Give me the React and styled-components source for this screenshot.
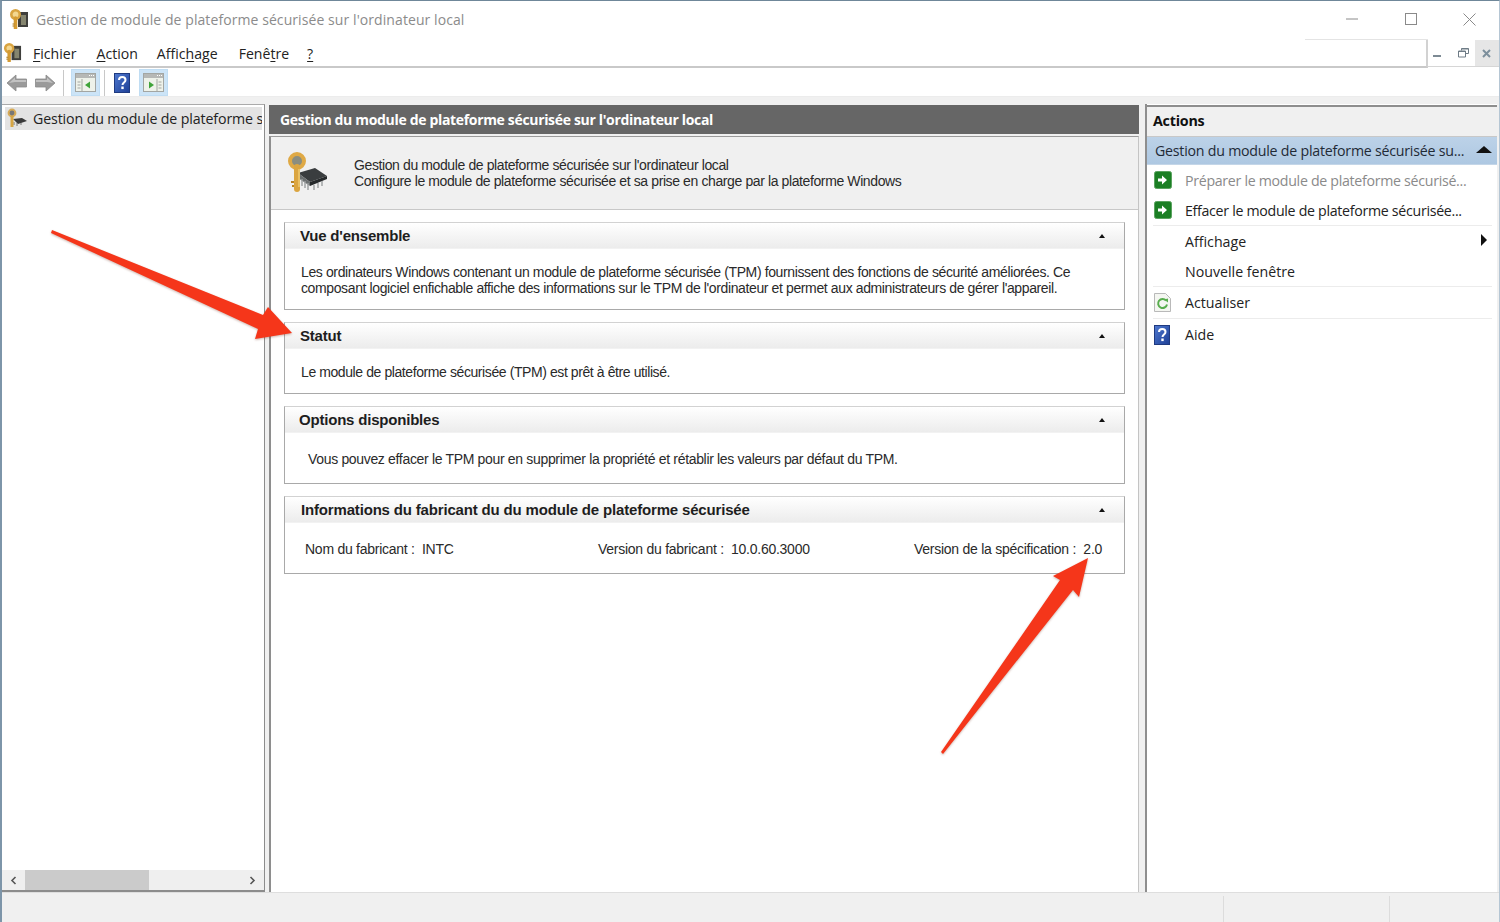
import React from 'react';
import styled, { createGlobalStyle } from 'styled-components';

const Global = createGlobalStyle`
  html, body { margin: 0; padding: 0; background: #fff; }
  #root { width: 1500px; height: 922px; overflow: hidden; }
  * { box-sizing: border-box; }
  svg { flex: none; display: block; }
`;
const ui = `"Open Sans", "Noto Sans", sans-serif`;
const classic = `"Liberation Sans", Arial, sans-serif`;

const Window = styled.div`
  position: relative; width: 1500px; height: 922px; display: flex; flex-direction: column;
  border-top: 1px solid #6f8799; border-left: 2px solid #7d95a9; border-right: 1px solid #b5c6d4;
  background: #fff; font-family: ${ui}; color: #1c1c1c; overflow: hidden;
`;
const TitleBar = styled.div`
  height: 38px; display: flex; align-items: center; padding: 0 0 2px 7px; flex: none;
`;
const TitleText = styled.div`
  margin-left: 7px; font-size: 14px; color: #8b8b8b; flex: 1; white-space: nowrap; letter-spacing: 0.08px;
`;
const Caption = styled.div`
  width: 59px; height: 36px; display: flex; align-items: center; justify-content: center;
`;
const MenuRow = styled.div`
  height: 29px; flex: none; display: flex; background: #fff;
`;
const MenuBar = styled.div`
  flex: 1; display: flex; align-items: center; padding-left: 1px; border-bottom: 2px solid #c9c9c9;
  border-right: 2px solid #d2d2d2; position: relative;
  &::after { content: ''; position: absolute; right: -2px; top: 0; width: 123px; height: 1px; background: #e4e4e4; }
`;
const MenuItem = styled.span`
  font-size: 14.1px; margin-left: ${p => p.$ml}px; color: #222; white-space: nowrap; padding-top: 1px;
  u { text-underline-offset: 2px; text-decoration-thickness: 1px; }
`;
const MdiButtons = styled.div`
  width: 71px; display: flex; align-items: stretch; height: 27px; margin-top: 1px; border-bottom: 1px solid #d6d6d6;
`;
const MdiButton = styled.div`
  width: 23.6px; display: flex; align-items: center; justify-content: center; background: ${p => p.$bg || '#fff'};
  padding-right: ${p => p.$pr || 0}px;
`;
const ToolBar = styled.div`
  height: 29px; flex: none; display: flex; align-items: center; padding: 1px 0 0 2px; background: #fff; border-bottom: 1px solid #ececec;
`;
const ToolButton = styled.div`
  width: ${p => p.$w || 29}px; height: 27px; display: flex; align-items: center; justify-content: center;
  background: ${p => p.$on ? '#cce4f7' : 'transparent'}; border: 1px solid ${p => p.$on ? '#c0ddf3' : 'transparent'};
`;
const ToolSep = styled.div`
  width: 1px; height: 26px; background: #c8c8c8; margin: 0 ${p => p.$r}px 0 ${p => p.$l}px;
`;
const Body = styled.div`
  flex: 1; min-height: 0; display: flex; background: #f0f0f0; padding-top: 7px;
`;
const TreePanel = styled.div`
  width: 263px; display: flex; flex-direction: column; background: #fff;
  border: 1px solid #8c8c8c; border-left: 0; border-top: 1px solid #aaa; border-bottom: 2px solid #8c8c8c;
`;
const TreeItem = styled.div`
  height: 23px; margin: 2px 2px 0 3px; background: #e3e3e3; display: flex; align-items: center; padding-left: 1px; overflow: hidden; flex: none;
`;
const TreeText = styled.span`
  margin-left: 5px; font-size: 14.2px; white-space: nowrap; color: #222; letter-spacing: -0.12px;
`;
const TreeFill = styled.div` flex: 1; `;
const ScrollBar = styled.div`
  height: 20px; display: flex; align-items: center; background: #efefef; flex: none;
`;
const ScrollEnd = styled.div`
  width: 23px; display: flex; justify-content: center; flex: none;
`;
const ScrollThumb = styled.div`
  width: 124px; height: 20px; background: #cbcbcb; flex: none;
`;
const ScrollRest = styled.div` flex: 1; `;
const Center = styled.div`
  margin-left: 4px; width: 870px; display: flex; flex-direction: column;
`;
const CenterHead = styled.div`
  height: 29px; margin-top: 1px; background: #666; color: #fff; font-weight: 700; font-size: 14px;
  display: flex; align-items: center; padding-left: 11px; flex: none; letter-spacing: -0.33px;
`;
const CenterBody = styled.div`
  flex: 1; margin-top: 2px; background: #fff; border-left: 2px solid #8e8e8e; border-right: 1px solid #c4c4c4;
  border-top: 1px solid #9a9a9a; display: flex; flex-direction: column;
`;
const Banner = styled.div`
  height: 73px; flex: none; background: #f0f0f0; border-bottom: 1px solid #c8c8c8; display: flex; align-items: center; padding-left: 15px;
`;
const BannerText = styled.div`
  margin-left: 26px; font-family: ${classic}; font-size: 14px; line-height: 16px; color: #2a2a2a; letter-spacing: -0.39px; white-space: nowrap;
`;
const Sections = styled.div`
  padding: 12px 13px 0 13px; display: flex; flex-direction: column; gap: 12px;
`;
const Section = styled.div`
  border: 1px solid #a9a9a9; border-top-color: #d2d2d2; background: #fff;
`;
const SectionHead = styled.div`
  height: 26px; display: flex; align-items: center; justify-content: space-between; padding: 0 19px 0 15px;
  background: linear-gradient(#ffffff, #ececec); border-bottom: 1px solid #f2f2f2;
`;
const SectionTitle = styled.div`
  font-family: ${classic}; font-weight: 700; font-size: 15px; color: #1e1e1e; letter-spacing: ${p => p.$ls ?? -0.2}px; white-space: nowrap; margin-left: ${p => p.$ml || 0}px;
`;
const Collapse = styled.div`
  width: 0; height: 0; border-left: 3.5px solid transparent; border-right: 3.5px solid transparent; border-bottom: 4px solid #111;
`;
const SectionBody = styled.div`
  height: ${p => p.$h}px; display: flex; align-items: center; padding: 2px 0 0 ${p => p.$pl}px;
  font-family: ${classic}; font-size: 14px; line-height: 16px; color: #2a2a2a; letter-spacing: ${p => p.$ls}px; white-space: nowrap;
`;
const InfoRow = styled.div`
  flex: 1; display: grid; grid-template-columns: 293px 316px auto;
`;
const Actions = styled.div`
  margin-left: 6px; width: 352px; display: flex; flex-direction: column; background: #fff;
  border-left: 2px solid #8e8e8e; position: relative;
`;
const ActionsHead = styled.div`
  height: 32px; margin-top: 1px; border-top: 2px solid #8e8e8e; background: #f0f0f0; font-weight: 700; font-size: 14.3px; color: #111;
  display: flex; align-items: center; padding: 0 0 3px 6px; flex: none; letter-spacing: -0.25px; border-bottom: 1px solid #c8c8c8;
`;
const ActionsSub = styled.div`
  height: 28px; flex: none; background: linear-gradient(#bcd2e8, #aec8e2); display: flex; align-items: center; justify-content: space-between;
  padding: 0 5px 0 8px; font-size: 14.2px; color: #1f2a36; white-space: nowrap; border-bottom: 1px solid #c4d6e8; letter-spacing: -0.23px;
`;
const List = styled.div` padding: 0 5px 0 6px; display: flex; flex-direction: column; `;
const ActionRow = styled.div`
  height: ${p => p.$h || 30.5}px; display: flex; align-items: center; position: relative;
  border-bottom: ${p => p.$sep ? '1px solid #ececec' : '0'};
`;
const ActionIcon = styled.div`
  width: 32px; flex: none; display: flex; align-items: center; padding-left: 1px;
`;
const ActionText = styled.span`
  font-size: 14.2px; color: ${p => p.$dim ? '#8a8a8a' : '#222'}; white-space: nowrap; flex: 1;
  letter-spacing: ${p => p.$tight ? -0.3 : 0}px;
`;
const SubArrow = styled.div`
  width: 0; height: 0; border-top: 6px solid transparent; border-bottom: 6px solid transparent; border-left: 6px solid #111; margin-right: 5px; margin-bottom: 2px;
`;
const Upper = styled.div`
  width: 0; height: 0; border-left: 8px solid transparent; border-right: 8px solid transparent; border-bottom: 7px solid #111; margin-bottom: 2px;
`;
const StatusBar = styled.div`
  height: 30px; flex: none; background: #f0f0f0; border-top: 1px solid #dedede; display: flex; justify-content: flex-end;
`;
const StatusCell = styled.div`
  width: ${p => p.$w}px; margin-top: 3px; border-left: 1px solid #dcdcdc; flex: none;
`;
const Overlay = styled.svg`
  position: absolute; left: -2px; top: -1px; pointer-events: none; filter: drop-shadow(0 1px 1px rgba(110, 40, 20, 0.35));
`;

const Key = ({ s = 20 }) => (
  <svg width={s} height={s} viewBox="0 0 20 20">
    <rect x="9" y="3" width="10" height="15" fill="#3f3f3c" />
    <rect x="12" y="6" width="5" height="10" fill="#85856f" />
    <circle cx="6.500" cy="5.500" r="4.200" fill="#f3d790" stroke="#d9a441" strokeWidth="2.600" />
    <path d="M6.500 9v10" stroke="#d49b33" strokeWidth="3.600" strokeLinecap="round" />
    <path d="M3.500 15h2M3.500 17h2" stroke="#a87821" />
  </svg>
);
const KeyChip = ({ s = 42 }) => (
  <svg width={s} height={s} viewBox="0 0 42 42">
    <path d="M12 21l17-5 12 8-17 6z" fill="#3a3d3f" />
    <path d="M12 21l12 9v4l-12-8z" fill="#6b6f70" />
    <path d="M24 30l17-6v3l-17 7z" fill="#25282a" />
    <path d="M16 27v7M19 29v7M22 31v7M28 33v5M32 31v5M36 29v5" stroke="#9a9d9e" strokeWidth="1.400" />
    <circle cx="11" cy="9" r="7" fill="#8b8d7f" stroke="#dfa945" strokeWidth="4" />
    <path d="M11 15v22" stroke="#dba540" strokeWidth="6" strokeLinecap="round" />
    <path d="M8 30H5M8 34H6" stroke="#b98425" strokeWidth="2" />
    <path d="M13 17v18" stroke="#f2d27e" strokeWidth="1.200" />
  </svg>
);
const TreeIcon = () => (
  <svg width="22" height="22" viewBox="0 0 22 22">
    <path d="M7 11l9-1 5 3-9 3z" fill="#3a3a3a" />
    <path d="M8 14v3M11 15v3M15 15v2" stroke="#777" />
    <circle cx="6" cy="5" r="3.400" fill="#777" stroke="#d7ab58" strokeWidth="2" />
    <path d="M6 8v11" stroke="#d7a645" strokeWidth="3" />
  </svg>
);
const NavArrow = ({ right }) => (
  <svg width="22" height="20" viewBox="0 0 22 20" style={right ? { transform: 'scaleX(-1)' } : undefined}>
    <path d="M1 10L10 2v4h10.500v8H10v4z" fill="#9a9a9a" stroke="#8a8a8a" strokeWidth="0.800" />
    <path d="M3 10l6-5.500V7h11v2H9z" fill="#c2c2c2" />
  </svg>
);
const Console = ({ mirror }) => (
  <svg width="21" height="19" viewBox="0 0 21 19">
    <rect x="0.500" y="0.500" width="20" height="18" fill="#eef2ea" stroke="#a3a6a3" />
    <rect x="1" y="1" width="19" height="4" fill="#b6b8b6" />
    <path d="M14 2.500h1M16 2.500h1M18 2.500h1" stroke="#fff" />
    {mirror ? (
      <>
        <path d="M14 6v12" stroke="#a3a6a3" />
        <path d="M15.500 9h3M15.500 12h3M15.500 15h3" stroke="#a3a6a3" />
        <path d="M6 8.500l5 3.500-5 3.500z" fill="#3fa33a" />
      </>
    ) : (
      <>
        <path d="M7 6v12" stroke="#a3a6a3" />
        <path d="M2.500 9h3M2.500 12h3M2.500 15h3" stroke="#a3a6a3" />
        <path d="M15 8.500L10 12l5 3.500z" fill="#3fa33a" />
      </>
    )}
  </svg>
);
const Help = () => (
  <svg width="16" height="20" viewBox="0 0 16 20">
    <defs>
      <linearGradient id="hb" x1="0" y1="0" x2="1" y2="1">
        <stop offset="0" stopColor="#4f79d0" />
        <stop offset="1" stopColor="#1d3f96" />
      </linearGradient>
    </defs>
    <rect x="0.500" y="0.500" width="15" height="19" fill="url(#hb)" stroke="#1f3a80" />
    <path d="M5 7c0-4 6.500-4 6.500 0 0 2.500-3 2.500-3 5" fill="none" stroke="#fff" strokeWidth="2" />
    <rect x="7.300" y="13.500" width="2.400" height="2.600" fill="#fff" />
  </svg>
);
const GoIcon = () => (
  <svg width="18" height="18" viewBox="0 0 18 18">
    <rect x="0.500" y="0.500" width="17" height="17" rx="2" fill="#1b7f24" stroke="#5aa35f" />
    <path d="M4 7.500h4V4.500l5 4.500-5 4.500v-3H4z" fill="#fff" />
  </svg>
);
const RefreshIcon = () => (
  <svg width="17" height="19" viewBox="0 0 17 19">
    <path d="M0.500 0.500h11l5 5v13h-16z" fill="#f4f6f1" stroke="#b9b9b9" />
    <path d="M12 7.500a4.500 4.500 0 1 0 1 4" fill="none" stroke="#58ad4e" strokeWidth="2" />
    <path d="M10 6.500l4-1v4z" fill="#58ad4e" />
  </svg>
);
const Chevron = ({ right }) => (
  <svg width="7" height="9" viewBox="0 0 7 9">
    <path d={right ? 'M1.500 1l3.500 3.500L1.500 8' : 'M5.500 1L2 4.500 5.500 8'} fill="none" stroke="#555" strokeWidth="1.600" />
  </svg>
);

const sections = [
  { title: "Vue d'ensemble", h: 60, pl: 16, ls: -0.38, lines: ["Les ordinateurs Windows contenant un module de plateforme sécurisée (TPM) fournissent des fonctions de sécurité améliorées. Ce", "composant logiciel enfichable affiche des informations sur le TPM de l'ordinateur et permet aux administrateurs de gérer l'appareil."] },
  { title: 'Statut', h: 44, pl: 16, ls: -0.41, lines: ['Le module de plateforme sécurisée (TPM) est prêt à être utilisé.'] },
  { title: 'Options disponibles', h: 50, pl: 23, ls: -0.33, ml: -1, lines: ['Vous pouvez effacer le TPM pour en supprimer la propriété et rétablir les valeurs par défaut du TPM.'] },
];

export default function App() {
  return (
    <>
      <Global />
      <Window>
        <TitleBar>
          <Key s={20} />
          <TitleText>Gestion de module de plateforme sécurisée sur l'ordinateur local</TitleText>
          <Caption>
            <svg width="12" height="2"><path d="M0 1h12" stroke="#8a8a8a" /></svg>
          </Caption>
          <Caption>
            <svg width="12" height="12"><rect x="0.500" y="0.500" width="11" height="11" fill="none" stroke="#8a8a8a" /></svg>
          </Caption>
          <Caption>
            <svg width="13" height="13"><path d="M0.500 0.500l12 12M12.500 0.500l-12 12" stroke="#8a8a8a" /></svg>
          </Caption>
        </TitleBar>
        <MenuRow>
          <MenuBar>
            <Key s={19} />
            <MenuItem $ml={11}><u>F</u>ichier</MenuItem>
            <MenuItem $ml={20}><u>A</u>ction</MenuItem>
            <MenuItem $ml={19}>Affic<u>h</u>age</MenuItem>
            <MenuItem $ml={21}>Fenê<u>t</u>re</MenuItem>
            <MenuItem $ml={18}><u>?</u></MenuItem>
          </MenuBar>
          <MdiButtons>
            <MdiButton $pr={5}>
              <svg width="8" height="8"><rect y="6" width="8" height="2" fill="#7d8a94" /></svg>
            </MdiButton>
            <MdiButton>
              <svg width="11" height="10"><path d="M3.500 2.500V.5h7v5H8M.5 3h7v6h-7z" fill="none" stroke="#6f7c86" /><path d="M.5 3.500h7M3.500 1h7" stroke="#6f7c86" /></svg>
            </MdiButton>
            <MdiButton $bg="#e6e6e6">
              <svg width="9" height="9"><path d="M1 1l7 7M8 1l-7 7" stroke="#7d8f9c" strokeWidth="2" /></svg>
            </MdiButton>
          </MdiButtons>
        </MenuRow>
        <ToolBar>
          <ToolButton $w={26}><NavArrow /></ToolButton>
          <ToolButton $w={29}><NavArrow right /></ToolButton>
          <ToolSep $l={4} $r={7} />
          <ToolButton $on><Console /></ToolButton>
          <ToolSep $l={4} $r={0} />
          <ToolButton $w={34}><Help /></ToolButton>
          <ToolButton $on><Console mirror /></ToolButton>
        </ToolBar>
        <Body>
          <TreePanel>
            <TreeItem>
              <TreeIcon />
              <TreeText>Gestion du module de plateforme s</TreeText>
            </TreeItem>
            <TreeFill />
            <ScrollBar>
              <ScrollEnd><Chevron /></ScrollEnd>
              <ScrollThumb />
              <ScrollRest />
              <ScrollEnd><Chevron right /></ScrollEnd>
            </ScrollBar>
          </TreePanel>
          <Center>
            <CenterHead>Gestion du module de plateforme sécurisée sur l'ordinateur local</CenterHead>
            <CenterBody>
              <Banner>
                <KeyChip />
                <BannerText>
                  Gestion du module de plateforme sécurisée sur l'ordinateur local<br />
                  Configure le module de plateforme sécurisée et sa prise en charge par la plateforme Windows
                </BannerText>
              </Banner>
              <Sections>
                {sections.map(s => (
                  <Section key={s.title}>
                    <SectionHead>
                      <SectionTitle $ml={s.ml}>{s.title}</SectionTitle>
                      <Collapse />
                    </SectionHead>
                    <SectionBody $h={s.h} $pl={s.pl} $ls={s.ls}>
                      <div>{s.lines.map(l => <div key={l}>{l}</div>)}</div>
                    </SectionBody>
                  </Section>
                ))}
                <Section>
                  <SectionHead>
                    <SectionTitle $ml={1} $ls={-0.17}>Informations du fabricant du du module de plateforme sécurisée</SectionTitle>
                    <Collapse />
                  </SectionHead>
                  <SectionBody $h={50} $pl={20} $ls={-0.26}>
                    <InfoRow>
                      <span>Nom du fabricant :&nbsp; INTC</span>
                      <span>Version du fabricant :&nbsp; 10.0.60.3000</span>
                      <span>Version de la spécification :&nbsp; 2.0</span>
                    </InfoRow>
                  </SectionBody>
                </Section>
              </Sections>
            </CenterBody>
          </Center>
          <Actions>
            <ActionsHead>Actions</ActionsHead>
            <ActionsSub>
              Gestion du module de plateforme sécurisée su...
              <Upper />
            </ActionsSub>
            <List>
              <ActionRow><ActionIcon><GoIcon /></ActionIcon><ActionText $dim $tight>Préparer le module de plateforme sécurisé...</ActionText></ActionRow>
              <ActionRow $sep><ActionIcon><GoIcon /></ActionIcon><ActionText $tight>Effacer le module de plateforme sécurisée...</ActionText></ActionRow>
              <ActionRow><ActionIcon /><ActionText>Affichage</ActionText><SubArrow /></ActionRow>
              <ActionRow $sep><ActionIcon /><ActionText>Nouvelle fenêtre</ActionText></ActionRow>
              <ActionRow $sep $h={31.5}><ActionIcon><RefreshIcon /></ActionIcon><ActionText>Actualiser</ActionText></ActionRow>
              <ActionRow $h={32}><ActionIcon><Help /></ActionIcon><ActionText>Aide</ActionText></ActionRow>
            </List>
          </Actions>
        </Body>
        <StatusBar>
          <StatusCell $w={166} />
          <StatusCell $w={110} />
        </StatusBar>
        <Overlay width="1500" height="922" viewBox="0 0 1500 922">
          <polygon points="52,230 263,315 268,307 292,333 255,339 258,329 51,233" fill="#f5361a" />
          <polygon points="941,752 1060,580 1053,576 1088,558 1079,597 1073,590 943,754" fill="#f5361a" />
        </Overlay>
      </Window>
    </>
  );
}
